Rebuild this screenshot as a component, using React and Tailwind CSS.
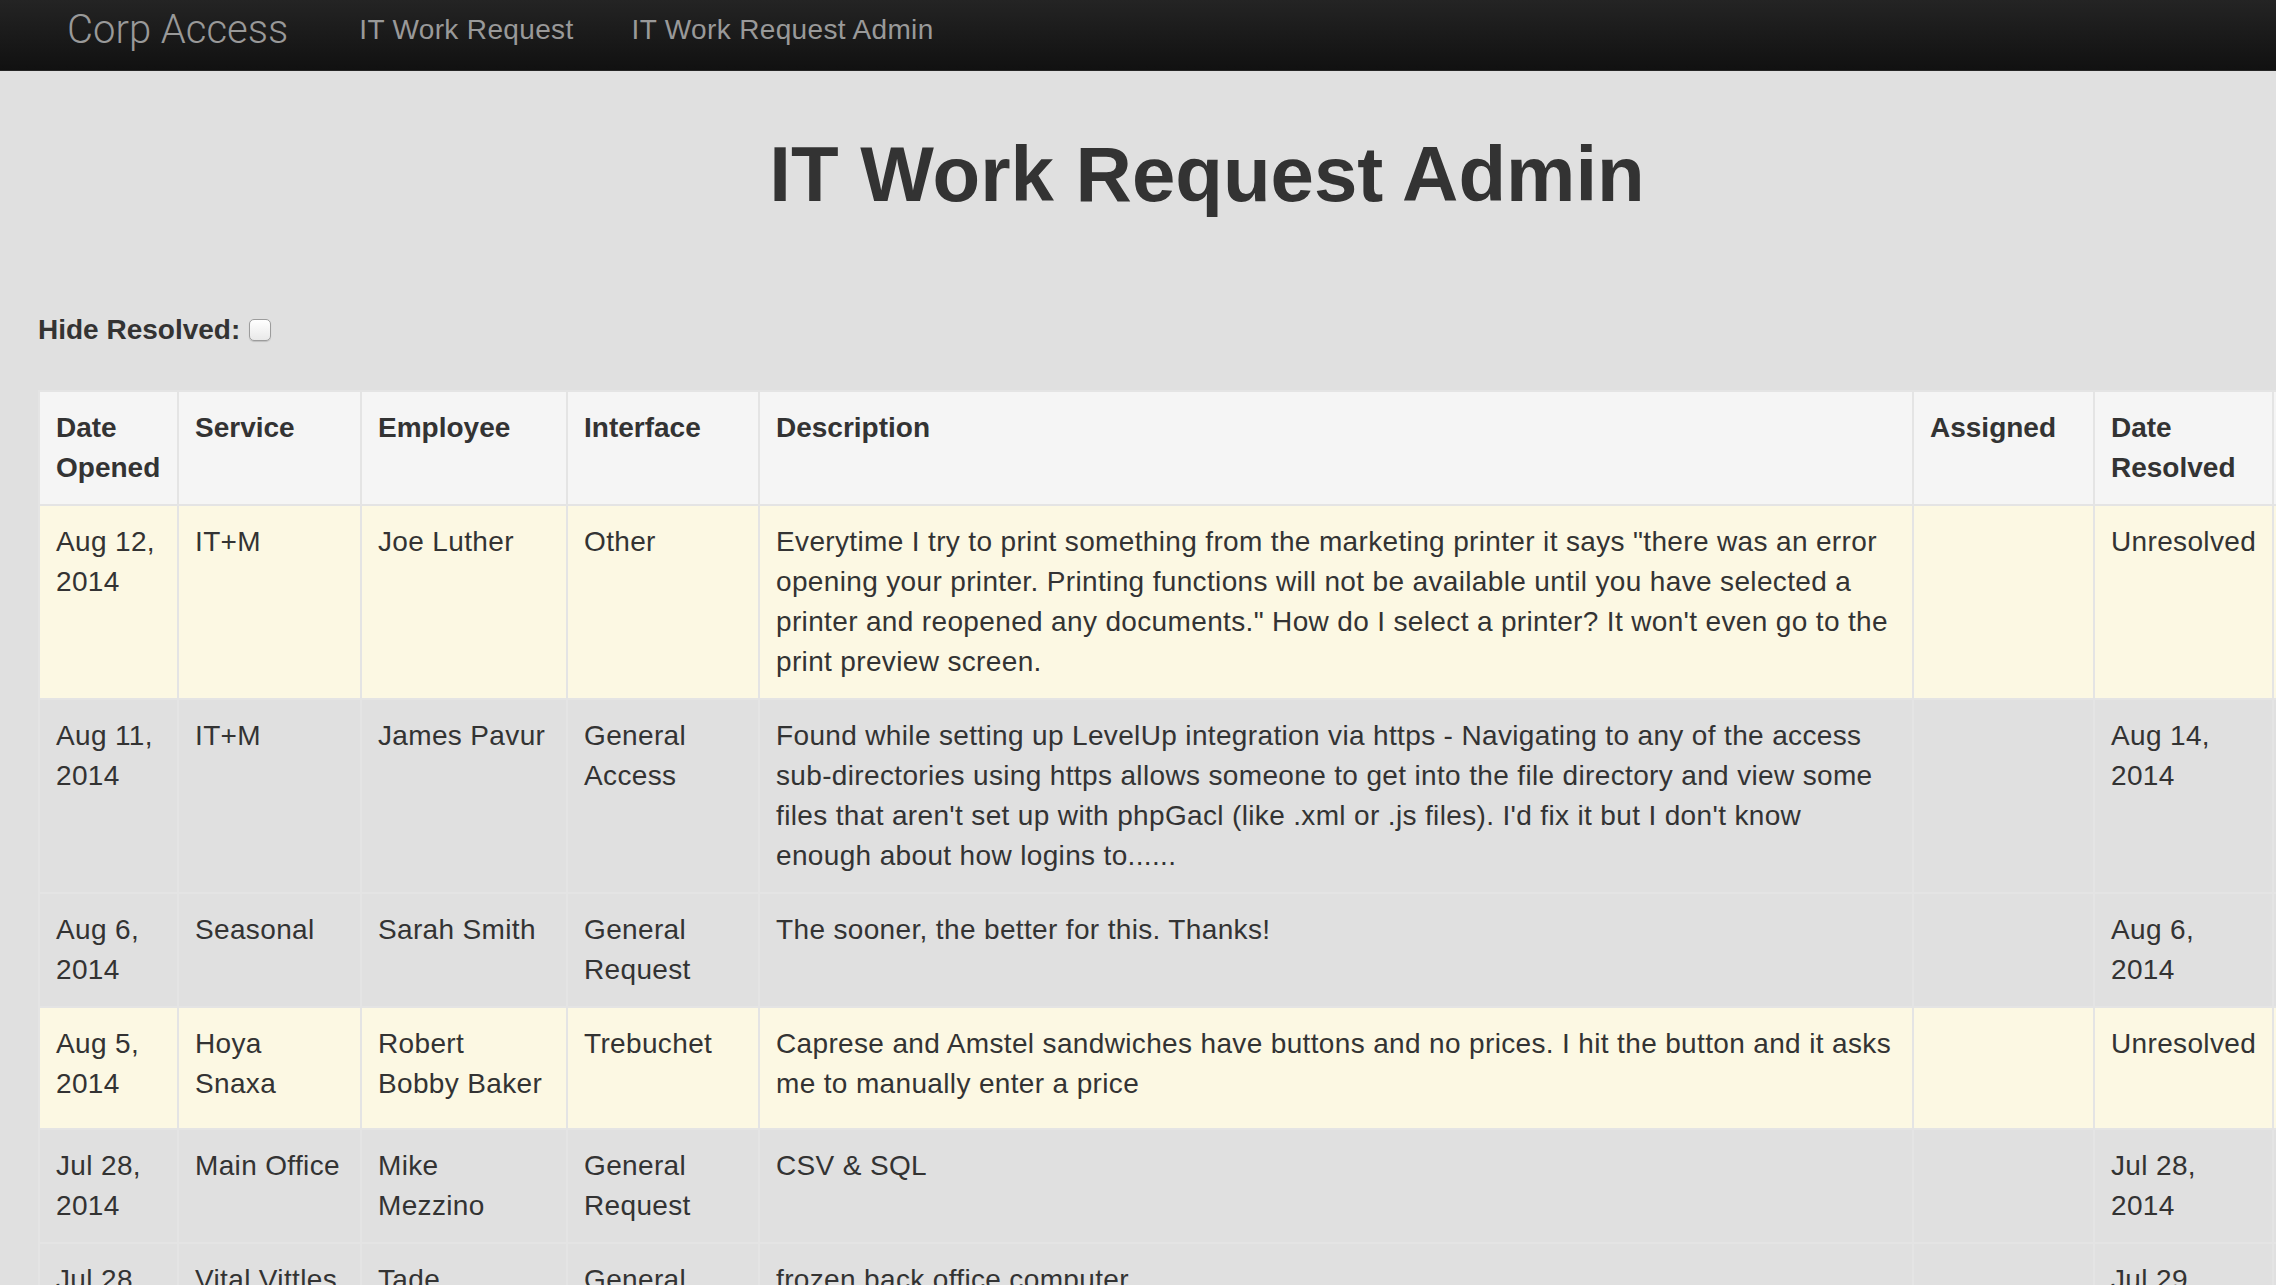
import React from 'react'

const rows = [
  {
    opened: 'Aug 12, 2014',
    service: 'IT+M',
    employee: 'Joe Luther',
    iface: 'Other',
    description:
      'Everytime I try to print something from the marketing printer it says "there was an error opening your printer. Printing functions will not be available until you have selected a printer and reopened any documents." How do I select a printer? It won\'t even go to the print preview screen.',
    resolved: null,
  },
  {
    opened: 'Aug 11, 2014',
    service: 'IT+M',
    employee: 'James Pavur',
    iface: 'General Access',
    description:
      "Found while setting up LevelUp integration via https - Navigating to any of the access sub-directories using https allows someone to get into the file directory and view some files that aren't set up with phpGacl (like .xml or .js files). I'd fix it but I don't know enough about how logins to......",
    resolved: 'Aug 14, 2014',
  },
  {
    opened: 'Aug 6, 2014',
    service: 'Seasonal',
    employee: 'Sarah Smith',
    iface: 'General Request',
    description: 'The sooner, the better for this. Thanks!',
    resolved: 'Aug 6, 2014',
  },
  {
    opened: 'Aug 5, 2014',
    service: 'Hoya Snaxa',
    employee: 'Robert Bobby Baker',
    iface: 'Trebuchet',
    description:
      'Caprese and Amstel sandwiches have buttons and no prices. I hit the button and it asks me to manually enter a price',
    resolved: null,
  },
  {
    opened: 'Jul 28, 2014',
    service: 'Main Office',
    employee: 'Mike Mezzino',
    iface: 'General Request',
    description: 'CSV & SQL',
    resolved: 'Jul 28, 2014',
  },
  {
    opened: 'Jul 28, 2014',
    service: 'Vital Vittles',
    employee: 'Tade',
    iface: 'General Request',
    description: 'frozen back office computer',
    resolved: 'Jul 29, 2014',
  },
]

const cell = 'border-2 border-[#e4e4e4] px-4 py-4 align-top text-left leading-[40px]'
const td = cell + ' tracking-[0.35px]'

export default function App() {
  return (
    <div className="min-h-screen w-full overflow-hidden bg-[#e0e0e0] font-['Helvetica_Neue','Liberation_Sans',Arial,sans-serif] text-[#333]">
      <div className="w-[2414px]">
        {/* navbar */}
        <nav className="flex h-[71px] items-start border-b border-[#252525] bg-linear-to-b from-[#242424] to-[#111111] pl-[67px] pt-[10px]">
          <a className="mr-[71px] font-['Roboto','Liberation_Sans',sans-serif] text-[40px] font-light leading-[40px] text-[#999]">
            Corp Access
          </a>
          <a className="text-[28px] leading-[40px] tracking-[0.35px] text-[#999]">IT Work Request</a>
          <a className="ml-[58px] text-[28px] leading-[40px] tracking-[0.35px] text-[#999]">IT Work Request Admin</a>
        </nav>

        <div className="px-[38px]">
          <h1 className="mt-[63px] text-center text-[78px] font-bold leading-[80px]">
            IT Work Request Admin
          </h1>

          <label className="mt-[96px] flex items-center gap-[9px] text-[28px] font-bold leading-[40px]">
            Hide Resolved:
            <input
              type="checkbox"
              className="h-[22px] w-[22px] appearance-none rounded-[5px] border border-[#9c9c9c] bg-linear-to-b from-white to-[#e9e9e9] shadow-[0_1px_1px_rgba(0,0,0,0.15)]"
            />
          </label>

          <table className="mt-[40px] w-[2338px] table-fixed border-collapse text-[28px]">
            <colgroup>
              <col className="w-[139px]" />
              <col className="w-[183px]" />
              <col className="w-[206px]" />
              <col className="w-[192px]" />
              <col className="w-[1154px]" />
              <col className="w-[181px]" />
              <col className="w-[179px]" />
              <col className="w-[104px]" />
            </colgroup>
            <thead>
              <tr className="bg-[#f5f5f5] font-bold">
                <th className={cell}>Date Opened</th>
                <th className={cell}>Service</th>
                <th className={cell}>Employee</th>
                <th className={cell}>Interface</th>
                <th className={cell}>Description</th>
                <th className={cell}>Assigned</th>
                <th className={cell}>Date Resolved</th>
                <th className={cell}></th>
              </tr>
            </thead>
            <tbody>
              {rows.map((r, i) => (
                <tr key={i} className={r.resolved ? '' : 'bg-[#fcf8e3]'}>
                  <td className={td}>{r.opened}</td>
                  <td className={td}>{r.service}</td>
                  <td className={td}>{r.employee}</td>
                  <td className={td}>{r.iface}</td>
                  <td className={td}>{r.description}</td>
                  <td className={td}>{!r.resolved && <div className="h-[88px]" />}</td>
                  <td className={td}>{r.resolved || 'Unresolved'}</td>
                  <td className={td}></td>
                </tr>
              ))}
            </tbody>
          </table>
        </div>
      </div>
    </div>
  )
}
